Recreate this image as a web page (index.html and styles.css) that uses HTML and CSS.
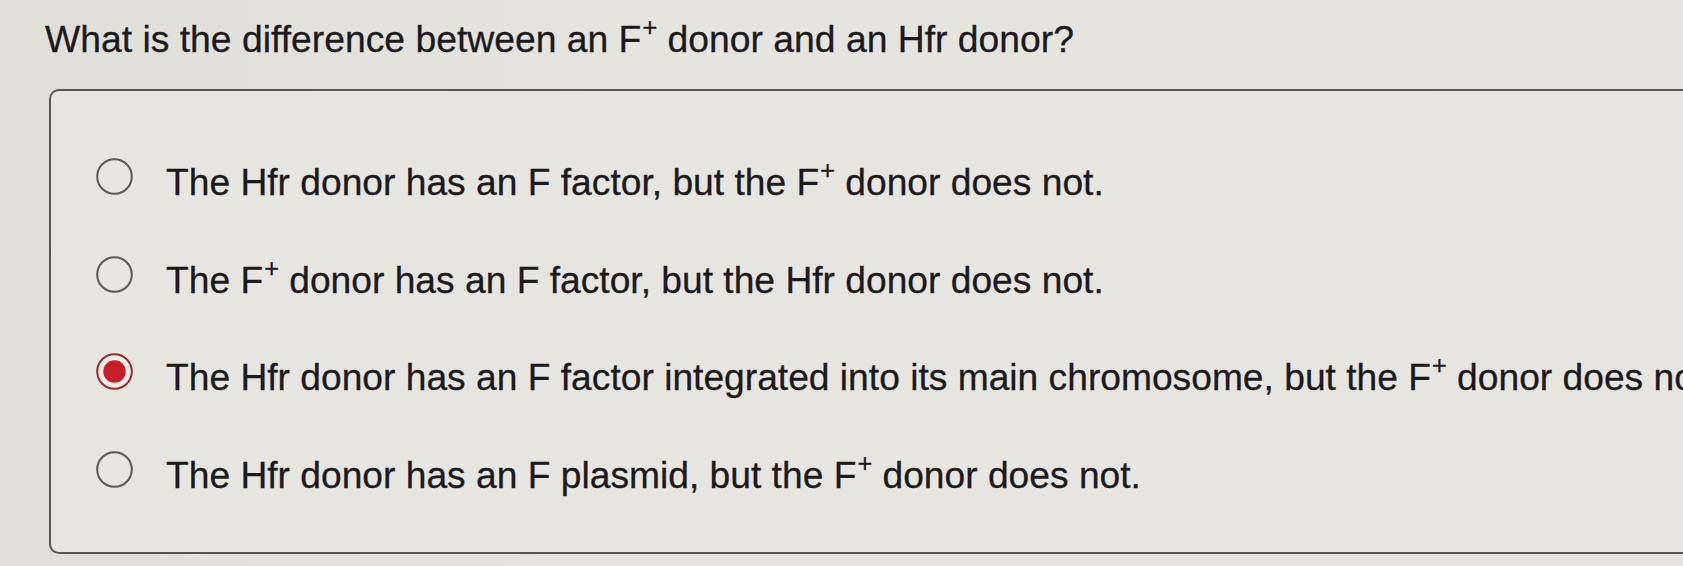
FILE: index.html
```html
<!DOCTYPE html>
<html lang="en">
<head>
<meta charset="utf-8">
<title>Question</title>
<link rel="stylesheet" href="styles.css">
</head>
<body>
<main class="page">
  <h1 class="question">What is the difference between an F<span class="sup">+</span> donor and an Hfr donor?</h1>
  <div class="answers">
    <label class="option">
      <svg class="radio" viewBox="0 0 37 37" width="37" height="37"><circle cx="18.5" cy="18.5" r="17.3" fill="none" stroke="#58575a" stroke-width="2"/></svg>
      <span class="text">The Hfr donor has an F factor, but the F<span class="sup">+</span> donor does not.</span>
    </label>
    <label class="option">
      <svg class="radio" viewBox="0 0 37 37" width="37" height="37"><circle cx="18.5" cy="18.5" r="17.3" fill="none" stroke="#58575a" stroke-width="2"/></svg>
      <span class="text">The F<span class="sup">+</span> donor has an F factor, but the Hfr donor does not.</span>
    </label>
    <label class="option">
      <svg class="radio" viewBox="0 0 37 37" width="37" height="37"><circle cx="18.5" cy="18.5" r="17.3" fill="#f1ecea" stroke="#8c3034" stroke-width="2"/><circle cx="18.5" cy="18.5" r="11.2" fill="#c61f2b"/></svg>
      <span class="text">The Hfr donor has an F factor integrated into its main chromosome, but the F<span class="sup">+</span> donor does not.</span>
    </label>
    <label class="option">
      <svg class="radio" viewBox="0 0 37 37" width="37" height="37"><circle cx="18.5" cy="18.5" r="17.3" fill="none" stroke="#58575a" stroke-width="2"/></svg>
      <span class="text">The Hfr donor has an F plasmid, but the F<span class="sup">+</span> donor does not.</span>
    </label>
  </div>
</main>
</body>
</html>
```
FILE: styles.css
```css
html, body {
  margin: 0;
  padding: 0;
  height: 100%;
  overflow: hidden;
  background: #e3e2dd;
}

.page {
  width: 1683px;
  height: 566px;
  overflow: hidden;
  background: linear-gradient(90deg, #dfded9 0%, #e5e4df 40%, #e4e3de 100%);
  font-family: "Liberation Sans", Arial, sans-serif;
  color: #1c191c;
  padding: 17px 0 0 45px;
  box-sizing: border-box;
}

.question {
  margin: 0;
  font-size: 37.3px;
  font-weight: normal;
  line-height: 44px;
  white-space: nowrap;
  -webkit-text-stroke: 0.3px #1c191c;
}

.sup {
  font-size: 0.68em;
  line-height: 0;
  vertical-align: 0.62em;
  margin-left: 1px;
}

.answers {
  margin: 28px 0 0 4px;
  width: 1700px;
  border: 2px solid #55555a;
  border-right: none;
  border-radius: 10px 0 0 10px;
  padding: 67px 0 55px 45px;
  display: flex;
  flex-direction: column;
  gap: 51.5px;
  background: #e6e5e0;
}

.option {
  display: flex;
  align-items: baseline;
  gap: 33px;
  font-size: 37.2px;
  line-height: 44px;
  white-space: nowrap;
  -webkit-text-stroke: 0.3px #1c191c;
}

.radio {
  flex: none;
  display: block;
  margin-bottom: 0;
}
```
